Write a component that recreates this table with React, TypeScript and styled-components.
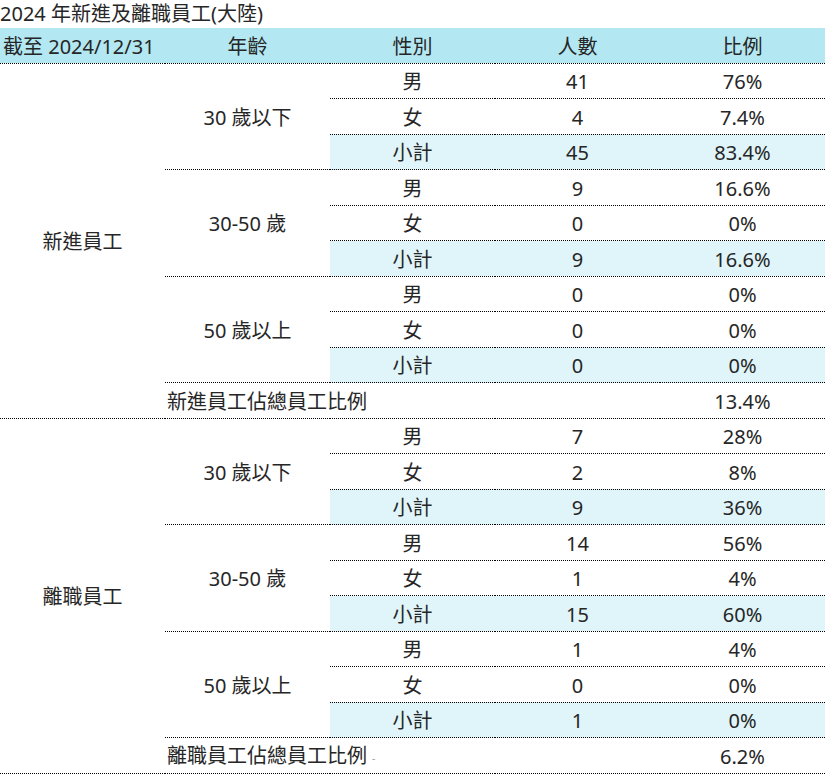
import * as React from "react";
import styled, { createGlobalStyle, css } from "styled-components";

const colorTokens = {
  text: "#262626",
  head: "#b3e8f2",
  subtotal: "#e0f5fa",
  rule: "#000",
};

const GlobalStyle = createGlobalStyle`
  html, body {
    margin: 0;
    padding: 0;
    background: #fff;
  }
  body {
    font-family: "Noto Sans", "Noto Sans CJK TC", sans-serif;
    color: ${colorTokens.text};
  }
`;

const Page = styled.div`
  width: 825px;
`;

const Title = styled.div`
  height: 28px;
  font-size: 20px;
  line-height: 28px;
  white-space: nowrap;
`;

const Table = styled.table`
  width: 825px;
  border-collapse: collapse;
  table-layout: fixed;
  font-size: 20px;
`;

const HeadRow = styled.tr`
  height: 35px;
  background: ${colorTokens.head};
`;

const HeadCell = styled.th<{ $left?: boolean }>`
  font-weight: 400;
  padding: 3px 0 0;
  line-height: 24px;
  text-align: ${(p) => (p.$left ? "left" : "center")};
  padding-left: ${(p) => (p.$left ? "3px" : "0")};
  border-bottom: 1px dotted ${colorTokens.rule};
  white-space: nowrap;
`;

const Row = styled.tr`
  height: 35.5px;
`;

const ruled = css`
  border-bottom: 1px dotted ${colorTokens.rule};
`;

const Cell = styled.td<{ $sub?: boolean; $left?: boolean; $ruled?: boolean }>`
  padding: 3px 0 0;
  line-height: 24px;
  text-align: ${(p) => (p.$left ? "left" : "center")};
  padding-left: ${(p) => (p.$left ? "2px" : "0")};
  vertical-align: middle;
  white-space: nowrap;
  background: ${(p) => (p.$sub ? colorTokens.subtotal : "transparent")};
  ${(p) => p.$ruled && ruled}
`;

const Tick = styled.span`
  color: #9a9a9a;
  font-size: 10px;
  margin-left: 5px;
  vertical-align: middle;
`;

type AgeGroup = { age: string; rows: [string, string, string][] };
type Group = { label: string; ages: AgeGroup[]; totalLabel: string; total: string; tick?: boolean };

const groups: Group[] = [
  {
    label: "新進員工",
    ages: [
      { age: "30 歲以下", rows: [["男", "41", "76%"], ["女", "4", "7.4%"], ["小計", "45", "83.4%"]] },
      { age: "30-50 歲", rows: [["男", "9", "16.6%"], ["女", "0", "0%"], ["小計", "9", "16.6%"]] },
      { age: "50 歲以上", rows: [["男", "0", "0%"], ["女", "0", "0%"], ["小計", "0", "0%"]] },
    ],
    totalLabel: "新進員工佔總員工比例",
    total: "13.4%",
  },
  {
    label: "離職員工",
    ages: [
      { age: "30 歲以下", rows: [["男", "7", "28%"], ["女", "2", "8%"], ["小計", "9", "36%"]] },
      { age: "30-50 歲", rows: [["男", "14", "56%"], ["女", "1", "4%"], ["小計", "15", "60%"]] },
      { age: "50 歲以上", rows: [["男", "1", "4%"], ["女", "0", "0%"], ["小計", "1", "0%"]] },
    ],
    totalLabel: "離職員工佔總員工比例",
    total: "6.2%",
    tick: true,
  },
];

const GroupRows = ({ group }: { group: Group }) => {
  const span = group.ages.length * 3 + 1;
  return (
    <>
      {group.ages.map((ag, ai) =>
        ag.rows.map((r, ri) => {
          const sub = r[0] === "小計";
          return (
            <Row key={`${ai}-${ri}`}>
              {ai === 0 && ri === 0 && (
                <Cell rowSpan={span} $ruled>
                  {group.label}
                </Cell>
              )}
              {ri === 0 && (
                <Cell rowSpan={3} $ruled>
                  {ag.age}
                </Cell>
              )}
              <Cell $sub={sub} $ruled>{r[0]}</Cell>
              <Cell $sub={sub} $ruled>{r[1]}</Cell>
              <Cell $sub={sub} $ruled>{r[2]}</Cell>
            </Row>
          );
        })
      )}
      <Row>
        <Cell colSpan={3} $left $ruled>
          {group.totalLabel}
          {group.tick && <Tick>-</Tick>}
        </Cell>
        <Cell $ruled>{group.total}</Cell>
      </Row>
    </>
  );
};

export default function App() {
  return (
    <Page>
      <GlobalStyle />
      <Title>2024 年新進及離職員工(大陸)</Title>
      <Table>
        <colgroup>
          <col style={{ width: 165 }} />
          <col style={{ width: 165 }} />
          <col style={{ width: 165 }} />
          <col style={{ width: 165 }} />
          <col style={{ width: 165 }} />
        </colgroup>
        <thead>
          <HeadRow>
            <HeadCell $left>截至 2024/12/31</HeadCell>
            <HeadCell>年齡</HeadCell>
            <HeadCell>性別</HeadCell>
            <HeadCell>人數</HeadCell>
            <HeadCell>比例</HeadCell>
          </HeadRow>
        </thead>
        <tbody>
          {groups.map((g) => (
            <GroupRows key={g.label} group={g} />
          ))}
        </tbody>
      </Table>
    </Page>
  );
}
